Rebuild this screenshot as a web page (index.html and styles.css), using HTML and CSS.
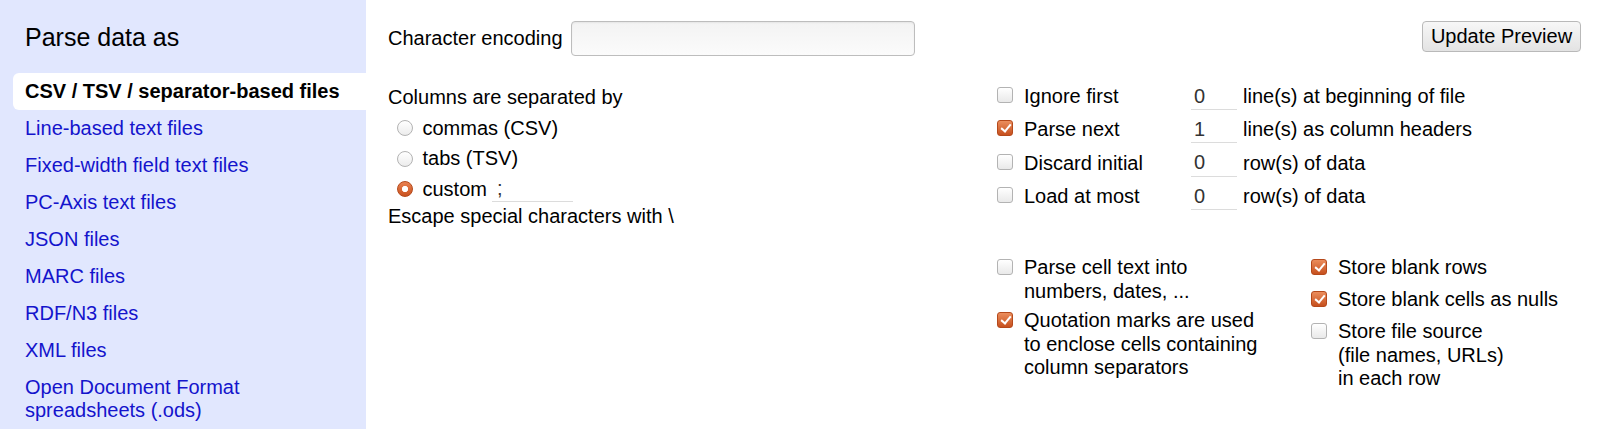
FILE: index.html
```html
<!DOCTYPE html>
<html lang="en">
<head>
<meta charset="utf-8">
<title>Parse data as</title>
<link rel="stylesheet" href="styles.css">
</head>
<body>
<div class="app">
  <nav class="sidebar">
    <h2 class="side-title">Parse data as</h2>
    <ul class="formats">
      <li class="fmt selected">CSV / TSV / separator-based files</li>
      <li class="fmt"><a class="fmt-link">Line-based text files</a></li>
      <li class="fmt"><a class="fmt-link">Fixed-width field text files</a></li>
      <li class="fmt"><a class="fmt-link">PC-Axis text files</a></li>
      <li class="fmt"><a class="fmt-link">JSON files</a></li>
      <li class="fmt"><a class="fmt-link">MARC files</a></li>
      <li class="fmt"><a class="fmt-link">RDF/N3 files</a></li>
      <li class="fmt"><a class="fmt-link">XML files</a></li>
      <li class="fmt"><a class="fmt-link">Open Document Format<br>spreadsheets (.ods)</a></li>
    </ul>
  </nav>
  <main class="panel">
    <div class="topbar">
      <label class="enc-label">Character encoding</label>
      <input class="enc-input" type="text">
      <button class="update-btn" type="button">Update Preview</button>
    </div>
    <div class="options">
      <div class="sep-col">
        <div class="sep-title">Columns are separated by</div>
        <div class="radio-list">
          <label class="radio-row"><input class="rb" type="radio" name="sep"><span>commas (CSV)</span></label>
          <label class="radio-row"><input class="rb" type="radio" name="sep"><span>tabs (TSV)</span></label>
          <label class="radio-row"><input class="rb" type="radio" name="sep" checked><span>custom</span><input class="sep-input" type="text" value=";"></label>
        </div>
        <div class="escape">Escape special characters with \</div>
      </div>
      <div class="opt-col">
        <div class="line-grid">
          <input class="cb" type="checkbox"><span class="lg-label">Ignore first</span><input class="num" type="text" value="0"><span class="lg-unit">line(s) at beginning of file</span>
          <input class="cb" type="checkbox" checked><span class="lg-label">Parse next</span><input class="num" type="text" value="1"><span class="lg-unit">line(s) as column headers</span>
          <input class="cb" type="checkbox"><span class="lg-label">Discard initial</span><input class="num" type="text" value="0"><span class="lg-unit">row(s) of data</span>
          <input class="cb" type="checkbox"><span class="lg-label">Load at most</span><input class="num" type="text" value="0"><span class="lg-unit">row(s) of data</span>
        </div>
        <div class="flags">
          <div class="flag-col flag-left">
            <label class="flag"><input class="cb" type="checkbox"><span>Parse cell text into<br>numbers, dates, ...</span></label>
            <label class="flag"><input class="cb" type="checkbox" checked><span>Quotation marks are used<br>to enclose cells containing<br>column separators</span></label>
          </div>
          <div class="flag-col flag-right">
            <label class="flag"><input class="cb" type="checkbox" checked><span>Store blank rows</span></label>
            <label class="flag"><input class="cb" type="checkbox" checked><span>Store blank cells as nulls</span></label>
            <label class="flag"><input class="cb" type="checkbox"><span>Store file source<br>(file names, URLs)<br>in each row</span></label>
          </div>
        </div>
      </div>
    </div>
  </main>
</div>
</body>
</html>
```

FILE: styles.css
```css
html, body {
  margin: 0;
  padding: 0;
  background: #ffffff;
}

body {
  font-family: "Liberation Sans", Arial, sans-serif;
  font-size: 20px;
  line-height: 23px;
  color: #000;
}

.app {
  display: flex;
  height: 429px;
  overflow: hidden;
}

/* ---------- sidebar ---------- */
.sidebar {
  width: 366px;
  flex: none;
  background: #e1e7fe;
}

.side-title {
  margin: 23px 0 21px 25px;
  font-size: 25px;
  line-height: 29px;
  font-weight: normal;
}

.formats {
  list-style: none;
  margin: 0;
  padding: 0;
}

.fmt {
  margin-left: 13px;
  padding: 7px 0 7px 12px;
  line-height: 23px;
  border-radius: 6px 0 0 6px;
}

.fmt.selected {
  background: #ffffff;
  font-weight: bold;
}

.fmt-link {
  color: #1414cc;
  cursor: pointer;
}

/* ---------- main panel ---------- */
.panel {
  flex: 1;
  padding: 21px 19px 0 22px;
}

.topbar {
  display: flex;
  align-items: flex-start;
}

.enc-label {
  line-height: 35px;
}

.enc-input {
  margin-left: 8px;
  width: 344px;
  height: 35px;
  box-sizing: border-box;
  border: 1px solid #bdbdbd;
  border-radius: 4px;
  background: linear-gradient(#f3f3f3, #fbfbfb);
  box-shadow: inset 0 1px 2px rgba(0,0,0,0.06);
  font: inherit;
}

.update-btn {
  margin-left: auto;
  width: 159px;
  height: 31px;
  box-sizing: border-box;
  border: 1px solid #b9b9b9;
  border-radius: 4px;
  background: linear-gradient(#f7f7f7, #e3e3e3);
  font-family: inherit;
  font-size: 20px;
  color: #000;
  padding: 0;
}

.options {
  display: flex;
  margin-top: 24px;
}

.sep-col {
  width: 609px;
  flex: none;
  padding-top: 6px;
}

.radio-list {
  margin-top: 4px;
}

.radio-row {
  display: flex;
  align-items: center;
  height: 30.5px;
}

.rb {
  appearance: none;
  -webkit-appearance: none;
  width: 16px;
  height: 16px;
  margin: 0 10px 0 8.5px;
  box-sizing: border-box;
  border: 1px solid #b3b3b3;
  border-radius: 50%;
  background: linear-gradient(#ffffff, #ececec);
}

.rb:checked {
  border-color: #b5491b;
  background: radial-gradient(circle, #ffffff 0 2.8px, transparent 3.4px),
              linear-gradient(#e98150, #c9521f);
}

.sep-input {
  margin-left: 5px;
  width: 81px;
  height: 27px;
  box-sizing: border-box;
  border: none;
  border-bottom: 1px solid #dcdcdc;
  padding: 0 0 0 5px;
  font: inherit;
  color: #333;
  background: transparent;
  align-self: flex-start;
  margin-top: 1px;
}

.escape {
  line-height: 23px;
}

/* ---------- right column ---------- */
.line-grid {
  display: grid;
  grid-template-columns: 27px 167px 52px auto;
  grid-auto-rows: 33.3px;
  align-items: center;
}

.cb {
  appearance: none;
  -webkit-appearance: none;
  width: 16px;
  height: 16px;
  margin: 0;
  box-sizing: border-box;
  border: 1px solid #b3b3b3;
  border-radius: 3px;
  background: linear-gradient(#ffffff, #e9e9e9);
}

.cb:checked {
  border-color: #b5491b;
  background: linear-gradient(#eb8d5c, #c6501e);
}

.cb:checked::after {
  content: "";
  display: block;
  width: 4px;
  height: 8px;
  margin: 1px 0 0 4.5px;
  border: solid #ffffff;
  border-width: 0 2.4px 2.4px 0;
  transform: rotate(40deg);
}

.line-grid .cb {
  margin-top: -3px;
}

.num {
  width: 46px;
  height: 27px;
  box-sizing: border-box;
  border: none;
  border-bottom: 1px solid #dcdcdc;
  padding: 0 0 0 3px;
  font: inherit;
  color: #333;
  background: transparent;
}

.flags {
  display: flex;
  margin-top: 43px;
}

.flag-col {
  display: flex;
  flex-direction: column;
  gap: 6px;
}

.flag-right {
  gap: 8.5px;
}

.flag-left {
  width: 314px;
  flex: none;
}

.flag {
  display: flex;
  align-items: flex-start;
  line-height: 23.5px;
}

.flag .cb {
  margin: 3px 11px 0 0;
  flex: none;
}
```
